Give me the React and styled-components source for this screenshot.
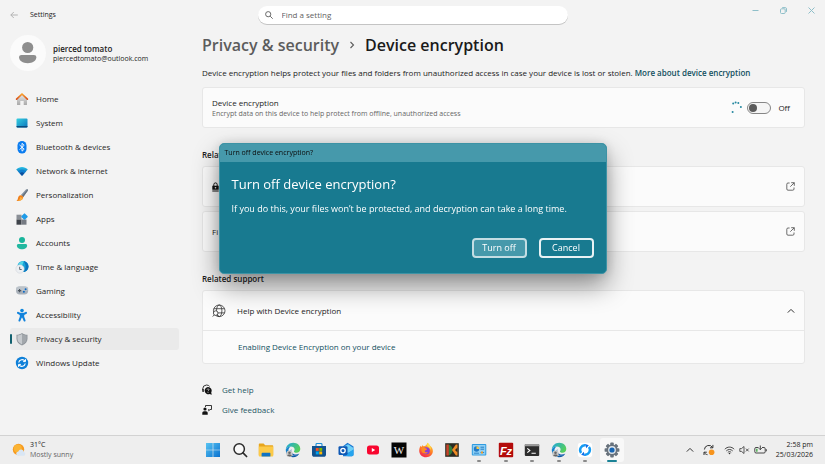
import { useState } from "react"
import styled, { createGlobalStyle } from "styled-components"

const GlobalStyle = createGlobalStyle`
* {
  box-sizing: border-box;
}
body {
  margin: 0;
  background: #f3f3f3;
  color: #1b1b1b;
  font-family: "Open Sans", "Noto Sans", sans-serif;
  font-size: 8px;
  line-height: 12px;
}
h1, h2, p {
  margin: 0;
}
button, input {
  font: inherit;
  color: inherit;
}
button {
  border: 0;
  padding: 0;
  background: none;
}
svg {
  display: block;
  flex: none;
}
`

const Desktop = styled.div`
  min-height: 100vh;
  display: flex;
  flex-direction: column;
`

/* ---------- title bar ---------- */

const TitleBar = styled.header`
  display: grid;
  grid-template-columns: 1fr minmax(0, 310px) 1fr;
  align-items: center;
  height: 30px;
`
const TitleLeft = styled.div`
  display: flex;
  align-items: center;
  gap: 12px;
  padding-left: 10px;
  font-size: 7px;
`
const Search = styled.label`
  display: flex;
  align-items: center;
  gap: 9px;
  height: 18px;
  padding: 0 7px;
  border-radius: 9px;
  background: #fff;
  box-shadow: 0 1px 0 #c4c4c4;
  color: #5d5d5d;
`
const SearchInput = styled.input`
  flex: 1;
  min-width: 0;
  padding: 0;
  border: 0;
  outline: 0;
  background: none;
  &::placeholder {
    color: #5f5f5f;
    opacity: 1;
  }
`
const WindowButtons = styled.div`
  display: flex;
  justify-content: flex-end;
  align-self: start;
`
const WindowButton = styled.button`
  display: grid;
  place-items: center;
  width: 28px;
  height: 20px;
  color: #8fbfc9;
`

/* ---------- sidebar ---------- */

const Window = styled.div`
  flex: 1;
  display: flex;
`
const Sidebar = styled.aside`
  flex: none;
  width: 201px;
  padding: 5px 22px 0 10px;
`
const Account = styled.div`
  display: flex;
  align-items: center;
  gap: 7px;
`
const AccountName = styled.div`
  font-weight: 600;
  line-height: 11px;
`
const AccountMail = styled.div`
  font-size: 7px;
  line-height: 10px;
`
const Nav = styled.nav`
  display: flex;
  flex-direction: column;
  gap: 2px;
  margin-top: 17px;
`
const NavItem = styled.a`
  position: relative;
  display: flex;
  align-items: center;
  gap: 7px;
  height: 22px;
  padding-left: 5px;
  border-radius: 3px;
  color: #1f1f1f;
  text-decoration: none;
  background: ${props => props.$active ? '#eaeaea' : 'transparent'};
  &::before {
    content: "";
    display: ${props => props.$active ? 'block' : 'none'};
    position: absolute;
    left: 0;
    top: 6px;
    width: 2px;
    height: 10px;
    border-radius: 1px;
    background: #12616f;
  }
`

/* ---------- content ---------- */

const Content = styled.main`
  flex: 1;
  min-width: 0;
  padding: 3px 20px 12px 1px;
`
const Crumbs = styled.h1`
  display: flex;
  align-items: center;
  gap: 10px;
  font-size: 16px;
  font-weight: 600;
  line-height: 24px;
  color: #1a1a1a;
`
const CrumbLink = styled.a`
  color: #5c5c5c;
  text-decoration: none;
`
const Intro = styled.p`
  margin: 10px 0 8px;
`
const TextLink = styled.a`
  color: #114f5e;
  font-weight: ${props => props.$strong ? 600 : 400};
  text-decoration: none;
`
const SectionTitle = styled.h2`
  margin: 21px 0 5px;
  font-size: 8px;
  font-weight: 600;
  line-height: 12px;
`
const Stack = styled.div`
  display: flex;
  flex-direction: column;
  gap: 4px;
`
const Card = styled.section`
  border: 1px solid #e7e7e7;
  border-radius: 3px;
  background: #fbfbfb;
`
const CardRow = styled.div`
  display: flex;
  align-items: center;
  justify-content: space-between;
  gap: 12px;
  height: 39px;
  padding: 0 9px;
`
const CardLink = styled(CardRow).attrs({ as: 'a' })`
  color: inherit;
  text-decoration: none;
`
const Expander = styled(CardRow).attrs({ as: 'button' })`
  width: 100%;
  text-align: left;
`
const RowLabel = styled.span`
  display: flex;
  align-items: center;
  gap: 11px;
`
const ExpandedRow = styled.div`
  padding: 10px 35px;
  border-top: 1px solid #e7e7e7;
`
const Caption = styled.div`
  font-size: 7px;
  line-height: 10px;
  color: #666;
`
const ToggleGroup = styled.label`
  display: flex;
  align-items: center;
  gap: 7px;
  padding-right: 5px;
`
const Toggle = styled.input`
  appearance: none;
  display: flex;
  align-items: center;
  width: 24px;
  height: 12px;
  margin: 0 0 0 -3px;
  padding: 0 1px;
  border: 1px solid #868686;
  border-radius: 6px;
  background: #f5f5f5;
  &::before {
    content: "";
    width: 8px;
    height: 8px;
    border-radius: 50%;
    background: #5b5b5b;
  }
  &:checked {
    justify-content: flex-end;
  }
`
const HelpLinks = styled.div`
  display: flex;
  flex-direction: column;
  gap: 8px;
  margin-top: 20px;
`
const HelpLink = styled.a`
  display: flex;
  align-items: center;
  gap: 10px;
  color: #1f5664;
  text-decoration: none;
`

/* ---------- dialog ---------- */

const Overlay = styled.div`
  position: fixed;
  inset: 0;
  display: flex;
  justify-content: center;
  align-items: flex-start;
  padding: 143px 16px 0;
  pointer-events: none;
`
const Dialog = styled.div`
  width: 100%;
  max-width: 388px;
  overflow: hidden;
  border: 1px solid #3d93a5;
  border-radius: 5px;
  background: #187a90;
  color: #fff;
  box-shadow: 0 12px 26px rgba(0, 0, 0, 0.42), 0 0 12px rgba(0, 0, 0, 0.12);
  pointer-events: auto;
`
const DialogBar = styled.div`
  height: 18px;
  padding: 0 5px;
  background: #4699ab;
  color: #0c0c0c;
  font-size: 7px;
  line-height: 18px;
`
const DialogBody = styled.div`
  padding: 12px 12px 15px;
  font-size: 9px;
`
const DialogTitle = styled.h2`
  font-size: 13px;
  font-weight: 400;
  line-height: 20px;
`
const DialogText = styled.p`
  margin: 9px 0 23px;
`
const DialogActions = styled.div`
  display: flex;
  justify-content: flex-end;
  gap: 12px;
`
const DialogButton = styled.button`
  width: 55px;
  height: 20px;
  border: 2px solid ${props => props.$primary ? '#c3dde3' : '#e8f2f4'};
  border-radius: 4px;
  background: ${props => props.$primary ? '#4699ab' : 'transparent'};
`

/* ---------- taskbar ---------- */

const Taskbar = styled.footer`
  display: grid;
  grid-template-columns: 1fr auto 1fr;
  align-items: center;
  height: 29px;
  border-top: 1px solid #d2d2d2;
  background: #eeeeee;
`
const WeatherWidget = styled.div`
  display: flex;
  align-items: center;
  gap: 4px;
  padding-left: 12px;
  font-size: 7px;
  line-height: 10px;
  color: #1c1c1c;
`
const Muted = styled.div`
  color: #666;
`
const TaskButtons = styled.div`
  display: flex;
  justify-content: space-between;
  width: 423px;
`
const TaskButton = styled.button`
  position: relative;
  display: grid;
  place-items: center;
  width: 24px;
  height: 24px;
  border-radius: 3px;
  background: ${props => props.$active ? '#f8f8f8' : 'transparent'};
  &::after {
    content: "";
    display: ${props => props.$running ? 'block' : 'none'};
    position: absolute;
    bottom: 0;
    left: 50%;
    width: ${props => props.$active ? '10px' : '4px'};
    height: 2px;
    border-radius: 1px;
    transform: translateX(-50%);
    background: ${props => props.$active ? '#1b8296' : '#8a8a8a'};
  }
`
const Tray = styled.div`
  display: flex;
  align-items: center;
  justify-content: flex-end;
  gap: 9px;
  padding-right: 12px;
`
const TrayGroup = styled.div`
  display: flex;
  align-items: center;
  gap: 4px;
`
const Clock = styled.div`
  font-size: 7px;
  line-height: 10px;
  text-align: right;
`

/* ---------- icons ---------- */

const NavIcon = ({ children }) => (
  <svg width="14" height="14" viewBox="0 0 14 14" fill="none" aria-hidden="true">{children}</svg>
)

const HomeIcon = () => (
  <NavIcon>
    <defs>
      <linearGradient id="wall" x1="0" y1="0" x2="0" y2="1"><stop stopColor="#e9e9e9" /><stop offset="1" stopColor="#a9a9a9" /></linearGradient>
      <linearGradient id="roof" x1="0" y1="0" x2="0" y2="1"><stop stopColor="#f9a12b" /><stop offset="1" stopColor="#d8501b" /></linearGradient>
    </defs>
    <path d="M2 6.500 7 2l5 4.500V12.500a.5.500 0 0 1-.5.500H8.700V9H5.300v4H2.500a.5.500 0 0 1-.5-.5z" fill="url(#wall)" />
    <path d="M1.600 7.100 7 2l5.400 5.100" stroke="url(#roof)" strokeWidth="1.700" strokeLinecap="round" strokeLinejoin="round" />
  </NavIcon>
)
const SystemIcon = () => (
  <NavIcon>
    <defs><linearGradient id="screen" x1="0" y1="0" x2="1" y2="1"><stop stopColor="#35d0e0" /><stop offset="1" stopColor="#0b74bd" /></linearGradient></defs>
    <rect x="1.500" y="2.500" width="11" height="9" rx="1" fill="url(#screen)" />
    <path d="M1.500 10h11v.6a.9.900 0 0 1-.9.900H2.400a.9.900 0 0 1-.9-.9z" fill="#0b4a7d" />
  </NavIcon>
)
const BluetoothIcon = () => (
  <NavIcon>
    <rect x="2.500" y="1" width="9" height="12.500" rx="4.500" fill="#0a7cf0" />
    <path d="m4.800 5.200 4.400 4L7 11.200V3.300l2.200 2-4.400 4" stroke="#fff" strokeWidth=".9" strokeLinejoin="round" strokeLinecap="round" />
  </NavIcon>
)
const NetworkIcon = () => (
  <NavIcon>
    <defs><linearGradient id="fan" x1="0" y1="0" x2="0" y2="1"><stop stopColor="#27c1ea" /><stop offset="1" stopColor="#0b4f9e" /></linearGradient></defs>
    <path d="M1.200 5.600C4.300 2.200 9.700 2.200 12.800 5.600L7 11.700z" fill="url(#fan)" />
    <path d="M3 7.400c2.200-2.300 5.800-2.300 8 0L7 11.700z" fill="#0f7fd0" />
    <path d="M4.700 9.300c1.300-1.300 3.300-1.300 4.600 0L7 11.700z" fill="#0d4e9c" />
  </NavIcon>
)
const BrushIcon = () => (
  <NavIcon>
    <path d="M12.600 1.300c.5.500.3 1.300-.2 2L8.300 9 5.900 7l4.800-5.200c.6-.6 1.400-1 1.900-.5z" fill="#8794a2" />
    <path d="M12.600 1.300c.5.500.3 1.300-.2 2L8.300 9 7 8z" fill="#66727f" />
    <path d="M5.600 7.200c1.200-.2 2.700 1 2.600 2.300-.2 2.500-3.500 3.900-6.900 3.500 1.300-.8 1.400-1.600 1.700-3 .3-1.600 1.300-2.600 2.600-2.800z" fill="#f0801c" />
    <path d="M5 9c.5 1.800-.8 3.200-2.300 3.900 2 0 5-1 5.400-3z" fill="#fbb040" />
  </NavIcon>
)
const AppsIcon = () => (
  <NavIcon>
    <path d="M1.500 2.700h5v4.800h-5z" fill="#8a8f96" />
    <path d="M1.500 7.500h5v5.200h-5z" fill="#3f444b" />
    <path d="M6.500 7.500h5v5.200h-5z" fill="#767b83" />
    <rect x="7" y="2.100" width="5" height="5" rx=".8" transform="rotate(45 9.500 4.600)" fill="#1f9be8" />
  </NavIcon>
)
const AccountsIcon = () => (
  <NavIcon>
    <circle cx="7" cy="4" r="3" fill="#19b59b" />
    <path d="M3.400 8h7.200c.9 0 1.500.6 1.500 1.500C12.100 12 9.700 13.300 7 13.300S1.900 12 1.900 9.500C1.900 8.600 2.500 8 3.400 8z" fill="#22b8a0" />
  </NavIcon>
)
const TimeIcon = () => (
  <NavIcon>
    <circle cx="8" cy="6.500" r="5.500" fill="#18a5d8" />
    <path d="M8 1c1.800 1.300 2.600 3.300 2.600 5.500S9.800 10.700 8 12c3 0 5.500-2.500 5.500-5.500S11 1 8 1z" fill="#0c74bd" />
    <path d="M3 4.500C4.500 2 7 1 9 1.200c-1 1.500-1.500 3-1.500 4z" fill="#52d7e8" />
    <circle cx="5" cy="9" r="4.200" fill="#eceff2" stroke="#c5cbd1" strokeWidth=".4" />
    <path d="M4.700 6.800v2.700h2" stroke="#4d5a66" strokeWidth=".9" />
  </NavIcon>
)
const GamingIcon = () => (
  <NavIcon>
    <rect x="1" y="2.600" width="12.200" height="8" rx="4" fill="#a9b1ba" />
    <rect x="1" y="2.600" width="12.200" height="4.500" rx="2.500" fill="#bcc3ca" />
    <path d="M4.600 4.900v3.400M2.900 6.600h3.400" stroke="#4b545d" strokeWidth="1.100" />
    <circle cx="10.600" cy="5.300" r="1" fill="#0b69c7" />
    <circle cx="8.900" cy="7.700" r="1" fill="#0b69c7" />
  </NavIcon>
)
const AccessibilityIcon = () => (
  <NavIcon>
    <circle cx="7" cy="2.600" r="1.800" fill="#0f86dc" />
    <path d="M2 4.400c.3-.6 1-.7 1.500-.4C5.500 5.200 8.500 5.200 10.500 4c.6-.3 1.200-.2 1.500.4.200.5 0 1-.5 1.300L9.200 6.900v1.800l1.300 3.500c.2.600 0 1.100-.5 1.300-.5.200-1.100 0-1.300-.5L7.300 9.800h-.6L5.300 13c-.2.500-.8.700-1.300.5s-.7-.7-.5-1.300l1.300-3.500V6.900L2.500 5.700C2 5.400 1.800 4.900 2 4.400z" fill="#1283dc" />
  </NavIcon>
)
const ShieldIcon = () => (
  <NavIcon>
    <path d="M7 1c1.500 1.100 3.300 1.700 5.500 1.800v4c0 3-2 5.200-5.500 6.600-3.500-1.400-5.500-3.600-5.500-6.600v-4C3.700 2.700 5.500 2.100 7 1z" fill="#8f959b" />
    <path d="M7 2c1.300.9 2.800 1.400 4.600 1.600v3.200c0 2.500-1.600 4.400-4.600 5.600z" fill="#a2a7ac" />
    <path d="M7 2c-1.300.9-2.800 1.400-4.600 1.600v3.200c0 2.500 1.600 4.400 4.600 5.600z" fill="#c6cace" />
  </NavIcon>
)
const UpdateIcon = () => (
  <NavIcon>
    <circle cx="7" cy="7" r="6.200" fill="#0f80d8" />
    <path d="M3.700 6.500A3.500 3.500 0 0 1 10 5.200M10.300 7.500A3.500 3.500 0 0 1 4 8.800" stroke="#fff" strokeWidth="1.200" />
    <path d="M10.500 3.200v2.400H8.100M3.500 10.800V8.400h2.400" stroke="#fff" strokeWidth="1" />
  </NavIcon>
)

const BackIcon = () => (
  <svg width="8" height="8" viewBox="0 0 8 8" fill="none" stroke="#adadad" strokeWidth=".9"><path d="M7.800 4H.8M3.800 1 .8 4l3 3" /></svg>
)
const SearchIcon = () => (
  <svg width="8" height="8" viewBox="0 0 8 8" fill="none" stroke="#5a5a5a" strokeWidth=".9"><circle cx="3.200" cy="3.200" r="2.600" /><path d="m5.200 5.200 2.500 2.500" /></svg>
)
const AvatarIcon = () => (
  <svg width="36" height="36" viewBox="0 0 36 36" role="img" aria-label="Account picture">
    <circle cx="18" cy="18" r="18" fill="#fbfbfb" />
    <circle cx="17.700" cy="12.500" r="5.600" fill="#8e8e8e" />
    <path d="M11.500 20h12.400c1.500 0 2.400.9 2.400 2.300 0 3.700-3.700 5.900-8.600 5.900s-8.600-2.200-8.600-5.900c0-1.400.9-2.300 2.400-2.300z" fill="#8e8e8e" />
  </svg>
)
const CrumbArrow = () => (
  <svg width="6" height="8" viewBox="0 0 6 8" fill="none" stroke="#5c5c5c" strokeWidth="1.100"><path d="m1.500 1 3 3-3 3" /></svg>
)
const Spinner = () => (
  <svg width="12" height="14" viewBox="0 0 12 14" fill="#2588a0">
    <circle cx="2.200" cy="2.400" r="1" /><circle cx="4.600" cy="1.400" r="1" /><circle cx="7.300" cy="2" r="1" /><circle cx="9.900" cy="6" r="1" /><circle cx="1.600" cy="11" r="1" />
  </svg>
)
const OpenIcon = () => (
  <svg width="9" height="9" viewBox="0 0 9 9" fill="none" stroke="#4a4a4a" strokeWidth=".8">
    <path d="M3.600 1H2a1.200 1.200 0 0 0-1.200 1.200V7A1.200 1.200 0 0 0 2 8.200h4.800A1.200 1.200 0 0 0 8 7V5.500M5.200.7h3.100v3.100M8.200.8 4.300 4.700" />
  </svg>
)
const LockIcon = () => (
  <svg width="7" height="10" viewBox="0 0 7 10"><path d="M1.800 4V2.600a1.700 1.700 0 0 1 3.400 0V4" fill="none" stroke="#111" strokeWidth="1" /><path d="M.3 3.800h6.400v4H.3zM.3 8.500h6.400v.9H.3z" fill="#111" /><circle cx="3.500" cy="5.800" r=".8" fill="#fbfbfb" /></svg>
)
const GlobeIcon = () => (
  <svg width="14" height="14" viewBox="0 0 14 14" fill="none" stroke="#333" strokeWidth=".8">
    <circle cx="7.200" cy="6.800" r="5.800" />
    <ellipse cx="7.200" cy="6.800" rx="2.700" ry="5.800" />
    <path d="M1.900 4.700h10.600M1.900 8.900h10.600" />
    <circle cx="3.700" cy="9.100" r="2.300" fill="#fbfbfb" />
    <path d="m2.200 10.900-1.500 1.700M5.400 10.800l1.300 1.700" />
  </svg>
)
const ChevronUp = () => (
  <svg width="8" height="8" viewBox="0 0 8 8" fill="none" stroke="#333" strokeWidth="1"><path d="m.8 5.600 3.200-3.200 3.200 3.200" /></svg>
)
const HeadsetIcon = () => (
  <svg width="10" height="12" viewBox="0 0 10 12" fill="none">
    <path d="M.7 6.500V5A4 4 0 0 1 4.500 1C6 1 7 1.600 7.600 2.400" stroke="#222" strokeWidth=".9" />
    <path d="M.4 5h1.400v3H.4z" fill="#222" />
    <path d="M6 2.900a3.700 3.700 0 0 1 3.200 5.500l.6 2.400-2.300-.7A3.700 3.700 0 1 1 6 2.900z" fill="#111" />
    <path d="M5 5.600c.2-1 2-1 2 .1 0 .8-1 .8-1 1.600M6 8.200v.8" stroke="#f3f3f3" strokeWidth=".7" />
  </svg>
)
const FeedbackIcon = () => (
  <svg width="10" height="12" viewBox="0 0 10 12" fill="none">
    <path d="M3.500 3V1.500h6v4H8L6.700 6.800V5.500h-.5" stroke="#222" strokeWidth=".9" />
    <circle cx="3" cy="5" r="1.600" fill="#111" /><path d="M.3 10.800V9c0-1.100.8-1.800 1.700-1.800h2c.9 0 1.700.7 1.700 1.800v1.800z" fill="#111" />
  </svg>
)

const AppIcon = ({ children }) => (
  <svg width="16" height="16" viewBox="0 0 16 16" fill="none" aria-hidden="true">{children}</svg>
)
const StartIcon = () => (
  <AppIcon>
    <defs><linearGradient id="win" x1="0" y1="0" x2="1" y2="1"><stop stopColor="#58c4f2" /><stop offset="1" stopColor="#0a72d0" /></linearGradient></defs>
    <path d="M1 1h6.700v6.700H1zM8.300 1H15v6.700H8.300zM1 8.300h6.700V15H1zM8.300 8.300H15V15H8.300z" fill="url(#win)" />
  </AppIcon>
)
const FindIcon = () => (
  <AppIcon>
    <circle cx="7.200" cy="7" r="5.200" stroke="#2b2b2b" strokeWidth="1.500" fill="#f8f8f8" /><path d="m11 10.900 3.600 3.600" stroke="#2b2b2b" strokeWidth="1.700" strokeLinecap="round" />
  </AppIcon>
)
const FolderIcon = () => (
  <AppIcon>
    <path d="M.8 2.600c0-.6.400-1 1-1h3.800l1.600 1.600h7c.6 0 1 .4 1 1v8.600c0 .6-.4 1-1 1H1.800c-.6 0-1-.4-1-1z" fill="#e7a51d" />
    <path d="M.8 4.600h14.400v8.800c0 .6-.4 1-1 1H1.800c-.6 0-1-.4-1-1z" fill="#fcca48" />
    <path d="M3.600 14.400v-2.600c0-.6.500-1 1-1h6.800c.6 0 1 .4 1 1v2.600z" fill="#0f73c4" />
  </AppIcon>
)
const EdgeIcon = ({ id }) => (
  <AppIcon>
    <defs>
      <linearGradient id={id + 'a'} x1="0" y1="0" x2="1" y2=".5"><stop stopColor="#1fa6e0" /><stop offset="1" stopColor="#56cf5b" /></linearGradient>
      <linearGradient id={id + 'b'} x1="0" y1="0" x2="1" y2="1"><stop stopColor="#1790dc" /><stop offset="1" stopColor="#0a4a93" /></linearGradient>
    </defs>
    <path d="M.8 7.500C1.200 3.600 4.300.8 8.200.8c4.200 0 7.100 2.900 7.100 6.200 0 2.300-1.700 3.800-3.800 3.800-1.700 0-2.600-.7-2.600-1.300 0-.5.700-.8.700-2 0-1.700-1.600-3-3.800-3S1.600 5.600.8 7.500z" fill={`url(#${id}a)`} />
    <path d="M.8 7.500c.8-2 2.800-3 5-3-2.200 1.200-2.500 3-2.300 4.500.3 3 3.300 5.200 6.500 4.700 1.800-.3 3.200-1.200 4.300-2.500-1 2.500-3.400 4-6.300 4C3.500 15.200.5 11.800.8 7.500z" fill={`url(#${id}b)`} />
    <path d="M6.400 7c-.8 3 1 5.500 4.600 5.600 1.200 0 2.300-.3 3.200-.8-1.100 1.500-3 2.300-5 2C6 13.300 4.300 9.500 6.400 7z" fill="#0d5cae" />
    <circle cx="4.500" cy="11.800" r="3.200" fill="#c9c9c9" /><circle cx="4.500" cy="10.800" r="1.300" fill="#666" /><path d="M2.300 13.800c0-1.900 4.400-1.900 4.400 0-.6.800-3.800.8-4.400 0z" fill="#666" />
  </AppIcon>
)
const StoreIcon = () => (
  <AppIcon>
    <path d="M5 4V2.400c0-.5.400-.9.900-.9h4.200c.5 0 .9.400.9.900V4" stroke="#1b8fd8" strokeWidth="1.100" />
    <path d="M1 3.900h14v8.800c0 1.200-.9 2.100-2.100 2.100H3.100C1.900 14.800 1 13.900 1 12.700z" fill="#12528f" />
    <path d="M4.800 6h2.900v2.900H4.800z" fill="#f25022" /><path d="M8.300 6h2.900v2.900H8.300z" fill="#7fba00" /><path d="M4.800 9.500h2.900v2.900H4.800z" fill="#00a4ef" /><path d="M8.300 9.500h2.900v2.900H8.300z" fill="#ffb900" />
  </AppIcon>
)
const OutlookIcon = () => (
  <AppIcon>
    <path d="m9.500.8 6 3.800v8c0 1-.7 1.700-1.700 1.700H5V4.200z" fill="#1a78d2" />
    <path d="m5 5 5-2.800L15.500 6v2L9.800 11 5 8z" fill="#6fd0f7" />
    <path d="m15.500 7.200-8 5.800c1 .9 2 1.300 3 1.300h3.300c1 0 1.700-.7 1.700-1.700z" fill="#25a4ee" />
    <rect x=".5" y="4.300" width="9" height="8.600" rx="1.200" fill="#0f59b5" />
    <circle cx="5" cy="8.600" r="2.200" stroke="#fff" strokeWidth="1.300" />
  </AppIcon>
)
const YoutubeIcon = () => (
  <AppIcon>
    <rect x="2" y="3.500" width="12" height="9" rx="2.500" fill="#f8062f" /><path d="m6.800 6.100 3.400 1.900-3.400 1.900z" fill="#fff" />
  </AppIcon>
)
const WikiIcon = () => (
  <AppIcon>
    <rect x=".5" y=".5" width="15" height="15" fill="#050505" />
    <text x="8" y="12" textAnchor="middle" fontFamily="Liberation Serif, serif" fontSize="11" fill="#f4f4f4">W</text>
  </AppIcon>
)
const FirefoxIcon = () => (
  <AppIcon>
    <defs><linearGradient id="fox" x1=".8" y1="0" x2=".3" y2="1"><stop stopColor="#ffd93a" /><stop offset=".5" stopColor="#ff7f27" /><stop offset="1" stopColor="#f3254f" /></linearGradient></defs>
    <path d="M9.600.8c1 1 1.600 1.800 2 2.800 1.900 1.200 3.300 3 3.300 5.400 0 3.500-3 6.200-6.800 6.200S1.200 12.500 1.200 8.700c0-1.800.5-3.600 1.600-5 .1.700.3 1.100.6 1.400.3-.8.800-1.500 1.500-2 0 .5.200 1 .5 1.200C8 4.200 8.400 2.800 9.600.8z" fill="url(#fox)" />
    <circle cx="8.300" cy="8.800" r="3.500" fill="#8a3ed6" />
    <path d="M3.500 6c1.500-.8 3-.5 4.100.3 1 .5 1.700.6 1.300 1.200-.5.700-2 .5-2.200 1.600 0 1 1.500 1.700 3.200.9-1 2.300-5.900 2.100-6.500-1.200z" fill="#ff8a22" />
    <path d="M9.600.8c2.500 2 3.600 4.200 3 7.300-.5-2-1.800-3.200-3.600-4C9.300 3 9.300 1.800 9.600.8z" fill="#ffe14b" />
  </AppIcon>
)
const MixIcon = () => (
  <AppIcon>
    <rect x="1.200" y="1.200" width="13.600" height="13.600" fill="#2b2b22" />
    <path d="M2.300 2.500h2.600v11H2.300z" fill="#c8432a" />
    <path d="M4.900 2.500C8 4 8.500 6.500 8.500 8S8 12 4.900 13.500z" fill="#2f7d3c" />
    <path d="M13.500 2.500v11h-1.600L8 8l3.900-5.500z" fill="#f08a24" />
    <path d="M13.500 5.500v5L11 8z" fill="#2b2b22" />
  </AppIcon>
)
const ControlPanelIcon = () => (
  <AppIcon>
    <rect x=".8" y="2" width="14.500" height="11.600" rx="1" fill="#2f9be0" /><rect x="1.800" y="3" width="12.500" height="9.600" fill="#8fd0f5" />
    <circle cx="5.500" cy="7" r="2.700" fill="#2179c6" /><path d="M5.500 7V4.300A2.700 2.700 0 0 1 8.200 7z" fill="#f7c948" />
    <path d="M9.500 5.200h3.600M9.500 7.200h3.600" stroke="#1b73bd" strokeWidth=".9" /><path d="M3 11.200h5M9.500 10.500h3.600" stroke="#2f85c8" strokeWidth="1" /><path d="M10 9.500h2v2h-2z" fill="#f09a28" />
  </AppIcon>
)
const FileZillaIcon = () => (
  <AppIcon>
    <rect x=".8" y=".8" width="14.400" height="14.400" rx="1" fill="#b30b0b" />
    <text x="8" y="12.500" textAnchor="middle" fontFamily="Liberation Sans, sans-serif" fontWeight="700" fontStyle="italic" fontSize="11" fill="#fff">Fz</text>
  </AppIcon>
)
const TerminalIcon = () => (
  <AppIcon>
    <rect x=".8" y="2" width="14.400" height="12" rx="1" fill="#2d2d2d" /><path d="M.8 3c0-.6.400-1 1-1h12.400c.6 0 1 .4 1 1v1.200H.8z" fill="#9a9a9a" />
    <path d="m3.300 6.300 2.600 2.200-2.600 2.200M7.500 11.200h4.300" stroke="#fff" strokeWidth="1.100" />
  </AppIcon>
)
const SyncAppIcon = () => (
  <AppIcon>
    <rect x=".8" y=".8" width="14.400" height="14.400" rx="3" fill="#fff" />
    <path d="M4.100 10.900A4.700 4.700 0 0 1 8.600 3.400M11.900 5.100A4.700 4.700 0 0 1 7.400 12.600" stroke="#159cf3" strokeWidth="2.400" />
    <path d="M8.200 1.900 11.800 3.200 9.200 6.200zM7.800 14.100 4.200 12.800 6.800 9.800z" fill="#0d6eea" />
  </AppIcon>
)
const GearIcon = () => (
  <AppIcon>
    <g fill="#69737d">
      {[0, 45, 90, 135, 180, 225, 270, 315].map(a => (
        <rect key={a} x="6.200" y=".6" width="3.600" height="4" rx=".9" transform={`rotate(${a} 8 8)`} />
      ))}
      <circle cx="8" cy="8" r="5.500" />
    </g>
    <circle cx="8" cy="8" r="3.900" fill="#dfe5ea" /><circle cx="8" cy="8" r="2.600" fill="#1766b4" />
  </AppIcon>
)
const WeatherIcon = () => (
  <svg width="14" height="14" viewBox="0 0 14 14"><circle cx="6.500" cy="6.500" r="5.700" fill="#f79a1e" /><circle cx="5.800" cy="5.500" r="4" fill="#fbb434" /><path d="M6.500 12.800a2.200 2.200 0 0 1-.2-4.400A3 3 0 0 1 12 9a2 2 0 0 1-.2 3.800z" fill="#d9e6f4" /></svg>
)
const TraySync = () => (
  <svg width="12" height="12" viewBox="0 0 12 12" fill="none" stroke="#333" strokeWidth="1"><path d="M1.400 5.500A4.400 4.400 0 0 1 9.600 3.600M9.900.9v2.900H7M1 11V8.200h2.800M1.200 8.400C1.800 9.500 3 10.500 4.500 10.700" /><circle cx="8.600" cy="8.300" r="2.800" fill="#f7941d" stroke="none" /></svg>
)
const WifiIcon = () => (
  <svg width="11" height="10" viewBox="0 0 11 10" fill="none" stroke="#333" strokeWidth=".9"><path d="M.8 4.200c2.700-2.800 6.700-2.800 9.400 0M2.300 5.900c1.900-1.900 4.500-1.900 6.400 0M3.800 7.400c1-1 2.400-1 3.400 0" /><circle cx="5.500" cy="8.500" r=".8" fill="#333" stroke="none" /></svg>
)
const MuteIcon = () => (
  <svg width="11" height="10" viewBox="0 0 11 10" fill="none" stroke="#333" strokeWidth=".8"><path d="M.8 3.600h1.700L5 1.500v7L2.500 6.400H.8zM6.900 3.600l2.800 2.800M9.700 3.600 6.900 6.400" /></svg>
)
const BatteryIcon = () => (
  <svg width="13" height="10" viewBox="0 0 13 10" fill="none" stroke="#333" strokeWidth=".9"><path d="M4.500 2.500H2A1.200 1.200 0 0 0 .8 3.700v3.100A1.200 1.200 0 0 0 2 8h8a1.200 1.200 0 0 0 1.200-1.200V3.700A1.200 1.200 0 0 0 10 2.500H8M12.300 4.200v2.100" /><path d="M6.300.5v4M4.800 3.200l1.500 1.500 1.500-1.500" /><path d="M2 3.800h1.600v3H2z" fill="#5ab55e" stroke="none" /></svg>
)

const navItems = [
  { label: 'Home', Icon: HomeIcon },
  { label: 'System', Icon: SystemIcon },
  { label: 'Bluetooth & devices', Icon: BluetoothIcon },
  { label: 'Network & internet', Icon: NetworkIcon },
  { label: 'Personalization', Icon: BrushIcon },
  { label: 'Apps', Icon: AppsIcon },
  { label: 'Accounts', Icon: AccountsIcon },
  { label: 'Time & language', Icon: TimeIcon },
  { label: 'Gaming', Icon: GamingIcon },
  { label: 'Accessibility', Icon: AccessibilityIcon },
  { label: 'Privacy & security', Icon: ShieldIcon, active: true },
  { label: 'Windows Update', Icon: UpdateIcon },
]

const taskItems = [
  { name: 'Start', icon: <StartIcon /> },
  { name: 'Search', icon: <FindIcon /> },
  { name: 'File Explorer', icon: <FolderIcon /> },
  { name: 'Edge', icon: <EdgeIcon id="edge1" /> },
  { name: 'Store', icon: <StoreIcon /> },
  { name: 'Outlook', icon: <OutlookIcon /> },
  { name: 'YouTube', icon: <YoutubeIcon /> },
  { name: 'Wikipedia', icon: <WikiIcon /> },
  { name: 'Firefox', icon: <FirefoxIcon /> },
  { name: 'Media', icon: <MixIcon /> },
  { name: 'Control Panel', icon: <ControlPanelIcon />, running: true },
  { name: 'FileZilla', icon: <FileZillaIcon />, running: true },
  { name: 'Terminal', icon: <TerminalIcon />, running: true },
  { name: 'Edge profile', icon: <EdgeIcon id="edge2" />, running: true },
  { name: 'Sync', icon: <SyncAppIcon />, running: true },
  { name: 'Settings', icon: <GearIcon />, running: true, active: true },
]

function ConfirmDialog(props) {
  return (
    <Overlay>
      <Dialog role="dialog" aria-labelledby="dialog-title">
        <DialogBar>Turn off device encryption?</DialogBar>
        <DialogBody>
          <DialogTitle id="dialog-title">Turn off device encryption?</DialogTitle>
          <DialogText>If you do this, your files won’t be protected, and decryption can take a long time.</DialogText>
          <DialogActions>
            <DialogButton $primary onClick={props.onClose}>Turn off</DialogButton>
            <DialogButton onClick={props.onClose}>Cancel</DialogButton>
          </DialogActions>
        </DialogBody>
      </Dialog>
    </Overlay>
  )
}

export default function App() {
  const [encrypted, setEncrypted] = useState(false)
  const [dialogOpen, setDialogOpen] = useState(true)
  const [helpOpen, setHelpOpen] = useState(true)

  return (
    <Desktop>
      <GlobalStyle />
      <TitleBar>
        <TitleLeft>
          <button aria-label="Back"><BackIcon /></button>
          <span>Settings</span>
        </TitleLeft>
        <Search>
          <SearchIcon />
          <SearchInput type="text" placeholder="Find a setting" aria-label="Find a setting" />
        </Search>
        <WindowButtons>
          <WindowButton aria-label="Minimize">
            <svg width="7" height="7" viewBox="0 0 7 7" stroke="currentColor"><path d="M.5 3.500h6" /></svg>
          </WindowButton>
          <WindowButton aria-label="Restore">
            <svg width="7" height="7" viewBox="0 0 7 7" fill="none" stroke="currentColor"><rect x=".5" y="1.800" width="4.700" height="4.700" rx="1" /><path d="M2.200.6h3A1.300 1.300 0 0 1 6.500 1.900v3" /></svg>
          </WindowButton>
          <WindowButton aria-label="Close">
            <svg width="7" height="7" viewBox="0 0 7 7" stroke="currentColor"><path d="m.5.500 6 6M6.500.500l-6 6" /></svg>
          </WindowButton>
        </WindowButtons>
      </TitleBar>

      <Window>
        <Sidebar>
          <Account>
            <AvatarIcon />
            <div>
              <AccountName>pierced tomato</AccountName>
              <AccountMail>piercedtomato@outlook.com</AccountMail>
            </div>
          </Account>
          <Nav>
            {navItems.map(({ label, Icon, active }) => (
              <NavItem key={label} href="#" $active={active}>
                <Icon />
                {label}
              </NavItem>
            ))}
          </Nav>
        </Sidebar>

        <Content>
          <Crumbs>
            <CrumbLink href="#">Privacy & security</CrumbLink>
            <CrumbArrow />
            <span>Device encryption</span>
          </Crumbs>
          <Intro>
            Device encryption helps protect your files and folders from unauthorized access in case your device is lost or stolen. <TextLink href="#" $strong>More about device encryption</TextLink>
          </Intro>
          <Card>
            <CardRow>
              <div>
                <div>Device encryption</div>
                <Caption>Encrypt data on this device to help protect from offline, unauthorized access</Caption>
              </div>
              <ToggleGroup>
                <Spinner />
                <Toggle type="checkbox" role="switch" checked={encrypted} onChange={e => setEncrypted(e.target.checked)} />
                {encrypted ? 'On' : 'Off'}
              </ToggleGroup>
            </CardRow>
          </Card>

          <SectionTitle>Related</SectionTitle>
          <Stack>
            <Card>
              <CardLink href="#" aria-label="BitLocker"><RowLabel><LockIcon /></RowLabel><OpenIcon /></CardLink>
            </Card>
            <Card>
              <CardLink href="#"><RowLabel>Fi</RowLabel><OpenIcon /></CardLink>
            </Card>
          </Stack>

          <SectionTitle>Related support</SectionTitle>
          <Card>
            <Expander aria-expanded={helpOpen} onClick={() => setHelpOpen(!helpOpen)}>
              <RowLabel><GlobeIcon />Help with Device encryption</RowLabel>
              <ChevronUp />
            </Expander>
            {helpOpen && (
              <ExpandedRow>
                <TextLink href="#">Enabling Device Encryption on your device</TextLink>
              </ExpandedRow>
            )}
          </Card>

          <HelpLinks>
            <HelpLink href="#"><HeadsetIcon />Get help</HelpLink>
            <HelpLink href="#"><FeedbackIcon />Give feedback</HelpLink>
          </HelpLinks>
        </Content>
      </Window>

      <Taskbar>
        <WeatherWidget>
          <WeatherIcon />
          <div>
            <div>31°C</div>
            <Muted>Mostly sunny</Muted>
          </div>
        </WeatherWidget>
        <TaskButtons>
          {taskItems.map(item => (
            <TaskButton key={item.name} aria-label={item.name} $running={item.running} $active={item.active}>
              {item.icon}
            </TaskButton>
          ))}
        </TaskButtons>
        <Tray>
          <ChevronUp />
          <TraySync />
          <TrayGroup>
            <WifiIcon />
            <MuteIcon />
            <BatteryIcon />
          </TrayGroup>
          <Clock>
            <div>2:58 pm</div>
            <div>25/03/2026</div>
          </Clock>
        </Tray>
      </Taskbar>

      {dialogOpen && <ConfirmDialog onClose={() => setDialogOpen(false)} />}
    </Desktop>
  )
}
